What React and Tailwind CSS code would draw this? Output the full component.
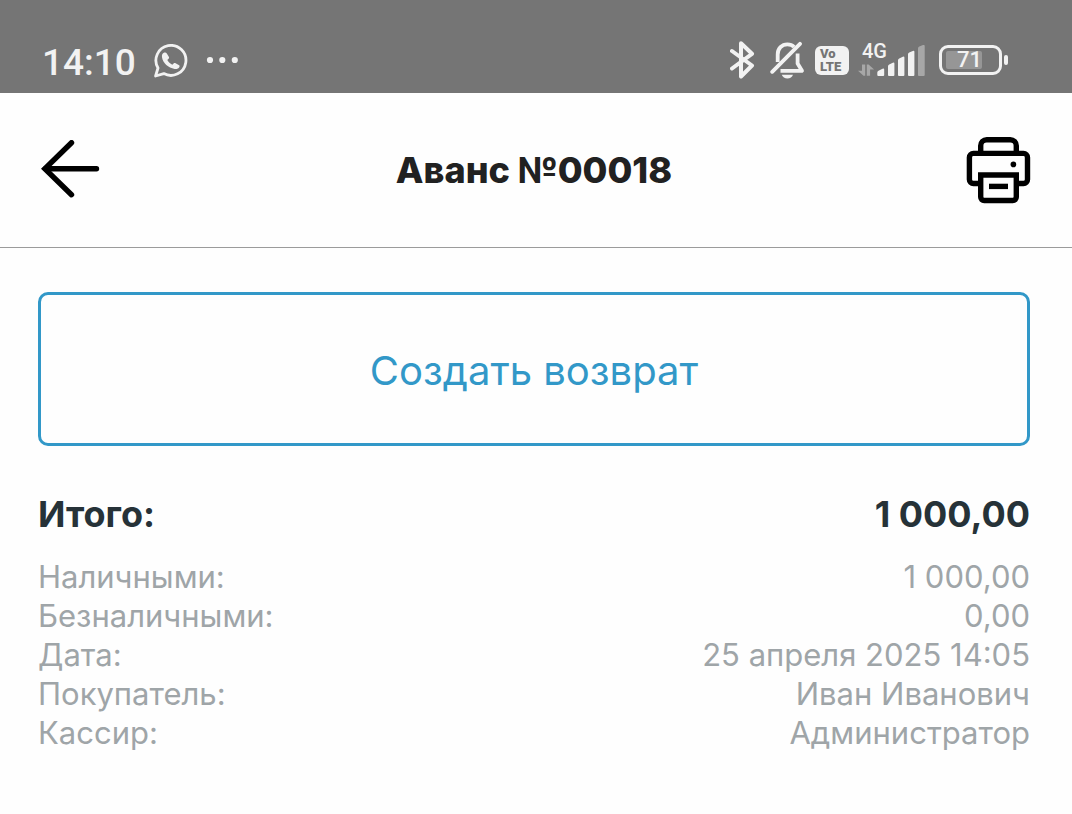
import React from "react";

const details = [
  { label: "Наличными:", value: "1 000,00" },
  { label: "Безналичными:", value: "0,00" },
  { label: "Дата:", value: "25 апреля 2025 14:05" },
  { label: "Покупатель:", value: "Иван Иванович" },
  { label: "Кассир:", value: "Администратор" },
];

function WhatsAppIcon() {
  return (
    <svg width="34" height="34" viewBox="0 0 34 34" fill="none" aria-hidden="true">
      <path
        d="M1.6 32 4 24A15 15 0 1 1 9.800 29.600Z"
        stroke="currentColor"
        strokeWidth="2.800"
        strokeLinejoin="round"
      />
      <path
        d="M9.800 8.800c1.200-.7 2.400-.4 3 .6l2 3.300c.5.800.3 1.500-.3 2.100l-1.200 1.300c1.200 2.100 2.900 3.700 5 4.600l1.300-1.300c.6-.5 1.300-.6 2-.2l3.100 1.700c.8.400 1.100 1.200.7 2-.9 1.700-2.700 2.300-4.800 2-6.300-.9-11.600-5.600-12.600-11.600-.3-2 .2-3.600 1.800-4.500Z"
        fill="currentColor"
      />
    </svg>
  );
}

function DotsIcon() {
  return (
    <svg width="33" height="34" viewBox="0 0 33 34" fill="currentColor" aria-hidden="true">
      <circle cx="4" cy="16" r="3.1" />
      <circle cx="16.300" cy="16" r="3.1" />
      <circle cx="28.800" cy="16" r="3.1" />
    </svg>
  );
}

function BluetoothIcon() {
  return (
    <svg width="25" height="40" viewBox="0 0 25 40" fill="none" aria-hidden="true">
      <path
        d="M2 11 22 25.500 11 36.500V3.300L22 13.800 2 28.500"
        stroke="currentColor"
        strokeWidth="4"
        strokeLinecap="round"
        strokeLinejoin="round"
      />
    </svg>
  );
}

function BellOffIcon() {
  return (
    <svg width="35" height="38" viewBox="0 0 35 38" fill="none" aria-hidden="true">
      <g stroke="currentColor" strokeWidth="3.800">
        <path d="M7.700 21V13.500C7.700 7.500 11.800 3.300 17.400 3.300c2.800 0 5.100 1 6.800 2.700" />
        <path d="M27.600 12.500V22.500L32 29.800H10.500" strokeLinejoin="round" />
        <path d="M30 2.800 2.200 30.800" strokeLinecap="round" />
      </g>
      <path d="M11.800 33.800H23c-.7 2.200-3 3.700-5.600 3.700s-4.900-1.500-5.600-3.700Z" fill="currentColor" />
    </svg>
  );
}

function SignalIcon() {
  return (
    <svg width="67" height="32" viewBox="0 0 67 32" fill="currentColor" aria-hidden="true">
      <g opacity="0.4">
        <path d="M4 19.500h3.200v11.300H5.500L0 25.800h4Z" />
        <path d="M8.800 19.500h1.800l5.500 5h-4v6.300H8.800Z" />
        <path d="M60 3.500q0-1.500 1.300-2l3.700-1.400q1.700-.5 1.700 1V30q0 1-1 1h-4.700q-1 0-1-1Z" />
      </g>
      <path d="M19.300 27.500q0-1.200 1.200-1.700l4-2q1.700-.7 1.700.8V30q0 1-1 1h-4.900q-1 0-1-1Z" />
      <path d="M30 21.300q0-1.300 1.200-1.800l3.600-1.800q1.600-.6 1.600.9V30q0 1-1 1h-4.400q-1 0-1-1Z" />
      <path d="M40 15.300q0-1.300 1.200-1.800l3.600-1.800q1.600-.6 1.600.9V30q0 1-1 1h-4.400q-1 0-1-1Z" />
      <path d="M50 9.300q0-1.300 1.200-1.800l3.600-1.600q1.600-.6 1.600.9V30q0 1-1 1h-4.400q-1 0-1-1Z" />
    </svg>
  );
}

function BackIcon() {
  return (
    <svg width="59" height="60" viewBox="0 0 59 60" fill="none" stroke="currentColor" strokeWidth="5.400" strokeLinecap="round" aria-hidden="true">
      <path d="M30.500 2.700 3.800 28.700 30.500 54.700" />
      <path d="M4.500 28.700H55.500" />
    </svg>
  );
}

function PrinterIcon() {
  return (
    <svg width="65" height="67" viewBox="0 0 65 67" fill="none" aria-hidden="true">
      <g stroke="currentColor" strokeWidth="5.400">
        <path d="M14.700 16.500V8.700a6 6 0 0 1 6-6H44.300a6 6 0 0 1 6 6v7.800" />
        <path d="M14.700 46.500H7.400a4 4 0 0 1-4-4V20.400a4 4 0 0 1 4-4H57.500a4 4 0 0 1 4 4V42.500a4 4 0 0 1-4 4H50.300" />
        <path d="M14.700 38H50.300V60a3.500 3.500 0 0 1-3.500 3.500H18.200a3.500 3.500 0 0 1-3.500-3.500Z" />
        <path d="M23 49.400H42" />
      </g>
      <circle cx="47.400" cy="27.400" r="2.800" fill="currentColor" />
    </svg>
  );
}

function StatusBar() {
  return (
    <div className="flex items-start justify-between bg-[#757575] pt-7 pr-16 pl-[42px] font-[Roboto,sans-serif] text-[#f2f2f2]">
      <div className="flex h-[65px] items-center">
        <span className="pt-1 text-[37px] leading-10 font-medium">14:10</span>
        <div className="ml-[18px] flex items-center gap-[18px]">
          <WhatsAppIcon />
          <DotsIcon />
        </div>
      </div>
      <div className="flex h-16 items-center">
        <BluetoothIcon />
        <div className="ml-[15px]">
          <BellOffIcon />
        </div>
        <div className="ml-[10px] flex h-[29px] w-[34px] flex-col justify-center rounded-md bg-[#f2f2f2] pl-[5px] font-[Roboto,sans-serif] text-[13px] leading-[13px] font-black text-[#757575]">
          <span>Vo</span>
          <span>LTE</span>
        </div>
        <div className="ml-[9px] flex flex-col pb-[3px]">
          <span className="-mb-4 pl-1 text-xl leading-5 font-medium">4G</span>
          <SignalIcon />
        </div>
        <div className="ml-[14px] flex items-center gap-[2px]">
          <div className="flex h-[30px] w-[63px] items-center rounded-[9px] border-[3px] border-[#f2f2f2] px-1">
            <div className="flex h-[18px] w-9 items-center rounded-xs bg-[#969696] pl-[11px] text-[22px] leading-[18px] font-medium">
              71
            </div>
          </div>
          <div className="h-[10px] w-1 rounded-xs bg-[#f2f2f2]" />
        </div>
      </div>
    </div>
  );
}

export default function App() {
  return (
    <div className="min-h-screen bg-[#fefefe] font-[Inter,sans-serif]">
      <StatusBar />
      <header className="flex h-[155px] items-center justify-between border-b border-[#9b9b9b] px-[41px] text-black">
        <button type="button" aria-label="Назад" className="flex w-[61px]">
          <BackIcon />
        </button>
        <h1 className="text-[36px] leading-10 font-extrabold text-[#212121]">Аванс №00018</h1>
        <button type="button" aria-label="Печать">
          <PrinterIcon />
        </button>
      </header>
      <main className="pt-11 pr-[42px] pl-[38px]">
        <button
          type="button"
          className="w-full rounded-[10px] border-[3px] border-[#3298c8] pt-[52px] pb-12 text-[40px] leading-12 text-[#3298c8]"
        >
          Создать возврат
        </button>
        <dl className="pt-12">
          <div className="flex justify-between text-[36px] leading-10 font-bold text-[#263238]">
            <dt>Итого:</dt>
            <dd>1 000,00</dd>
          </div>
          <div className="pt-[23px] text-[31px] leading-[39px] text-[#9fa5a8]">
            {details.map((item) => (
              <div key={item.label} className="flex justify-between">
                <dt>{item.label}</dt>
                <dd>{item.value}</dd>
              </div>
            ))}
          </div>
        </dl>
      </main>
    </div>
  );
}
